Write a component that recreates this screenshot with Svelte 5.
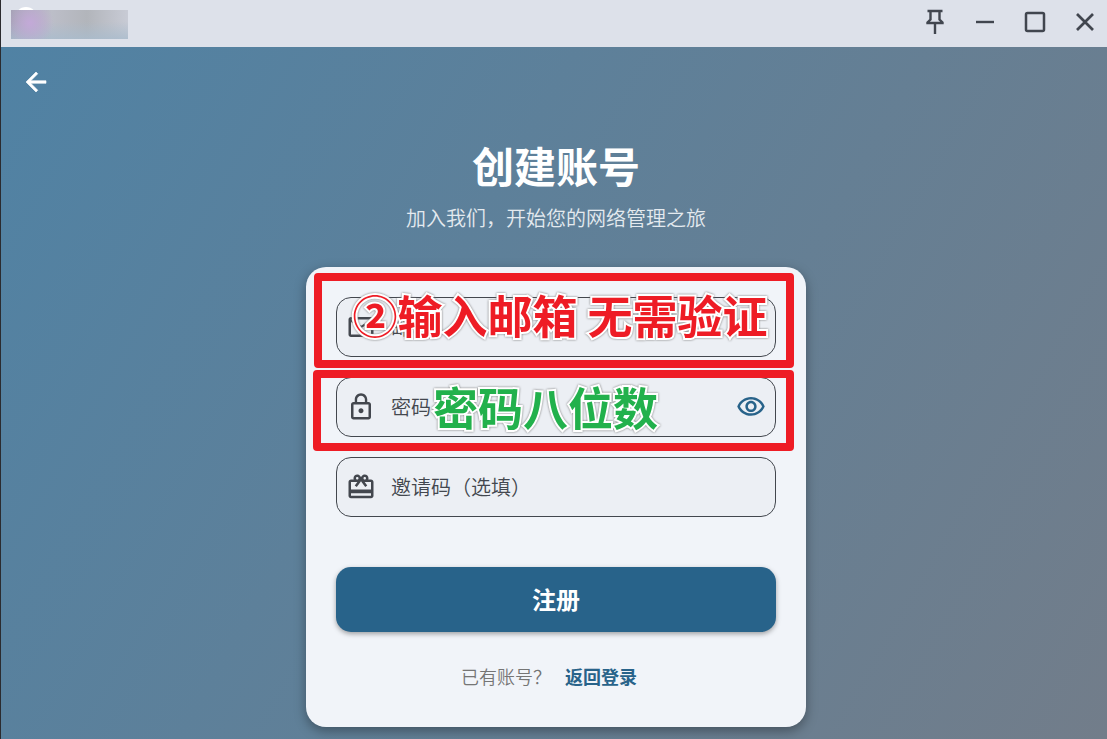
<script lang="ts">
	let email = $state('');
	let password = $state('');
	let invite = $state('');
	let showPassword = $state(false);
</script>

<div class="window">
	<header>
		<div class="brand">
			<span class="logo"></span>
			<span class="masked"></span>
		</div>
		<div class="controls">
			<button aria-label="置顶">
				<svg width="30" height="30" viewBox="0 0 30 30" fill="none" stroke="#41464f" stroke-width="2.4">
					<path d="M7.500 4H22.500M10.500 4V12.500L7.500 15.500V16H22.500V15.500L19.500 12.500V4M15 16V27" />
				</svg>
			</button>
			<button aria-label="最小化">
				<svg width="30" height="30" viewBox="0 0 30 30" fill="none" stroke="#41464f" stroke-width="2.4">
					<path d="M6 15H24" />
				</svg>
			</button>
			<button aria-label="最大化">
				<svg width="30" height="30" viewBox="0 0 30 30" fill="none" stroke="#41464f" stroke-width="2.5">
					<rect x="6" y="6" width="18" height="18" rx="1.500" />
				</svg>
			</button>
			<button aria-label="关闭">
				<svg width="30" height="30" viewBox="0 0 30 30" fill="none" stroke="#41464f" stroke-width="2.7">
					<path d="M7 7L23 23M23 7L7 23" />
				</svg>
			</button>
		</div>
	</header>

	<main>
		<button class="back" aria-label="返回">
			<svg width="30" height="30" viewBox="0 0 24 24" fill="#fff" stroke="#fff" stroke-width=".5">
				<path d="M20 11H7.830l5.590-5.590L12 4l-8 8 8 8 1.410-1.410L7.830 13H20v-2z" />
			</svg>
		</button>

		<h1>创建账号</h1>
		<p class="subtitle">加入我们，开始您的网络管理之旅</p>

		<form onsubmit={(e) => e.preventDefault()}>
			<div class="field">
				<svg width="30" height="30" viewBox="0 0 24 24" fill="#43474e" aria-hidden="true">
					<path d="M22 6c0-1.100-.9-2-2-2H4c-1.100 0-2 .9-2 2v12c0 1.100.9 2 2 2h16c1.100 0 2-.9 2-2V6zm-2 0l-8 5-8-5h16zm0 12H4V8l8 5 8-5v10z" />
				</svg>
				<input type="email" aria-label="邮箱" placeholder="邮箱" bind:value={email} />
				<div class="note email-note"><span>②输入邮箱 无需验证</span></div>
			</div>

			<div class="field">
				<svg width="30" height="30" viewBox="0 0 24 24" fill="#43474e" aria-hidden="true">
					<path d="M12 17c1.100 0 2-.9 2-2s-.9-2-2-2-2 .9-2 2 .9 2 2 2zm6-9h-1V6c0-2.760-2.240-5-5-5S7 3.240 7 6v2H6c-1.100 0-2 .9-2 2v10c0 1.100.9 2 2 2h12c1.100 0 2-.9 2-2V10c0-1.100-.9-2-2-2zM8.900 6c0-1.710 1.390-3.100 3.100-3.100s3.100 1.390 3.100 3.100v2H8.900V6zM18 20H6V10h12v10z" />
				</svg>
				<input type={showPassword ? 'text' : 'password'} aria-label="密码" placeholder="密码" bind:value={password} />
				<button type="button" class="eye" aria-label="显示密码" onclick={() => (showPassword = !showPassword)}>
					<svg width="30" height="30" viewBox="0 0 24 24" fill="#28638a">
						<path d="M12 6c3.790 0 7.170 2.130 8.820 5.500C19.170 14.870 15.790 17 12 17s-7.170-2.130-8.820-5.500C4.830 8.130 8.210 6 12 6m0-2C7 4 2.730 7.110 1 11.500 2.730 15.890 7 19 12 19s9.270-3.110 11-7.500C21.270 7.110 17 4 12 4zm0 5c1.380 0 2.500 1.120 2.500 2.500S13.380 14 12 14s-2.500-1.120-2.500-2.500S10.620 9 12 9m0-2c-2.480 0-4.500 2.020-4.500 4.500S9.520 16 12 16s4.500-2.020 4.500-4.500S14.480 7 12 7z" />
					</svg>
				</button>
				<div class="note password-note"><span>密码八位数</span></div>
			</div>

			<div class="field">
				<svg width="30" height="30" viewBox="0 0 24 24" fill="#43474e" aria-hidden="true">
					<path d="M20 6h-2.180c.11-.31.18-.65.18-1 0-1.660-1.340-3-3-3-1.050 0-1.960.54-2.500 1.350l-.5.670-.5-.680C10.960 2.540 10.050 2 9 2 7.340 2 6 3.340 6 5c0 .35.07.69.18 1H4c-1.110 0-1.990.89-1.990 2L2 19c0 1.110.89 2 2 2h16c1.110 0 2-.89 2-2V8c0-1.110-.89-2-2-2zm-5-2c.55 0 1 .45 1 1s-.45 1-1 1-1-.45-1-1 .45-1 1-1zM9 4c.55 0 1 .45 1 1s-.45 1-1 1-1-.45-1-1 .45-1 1-1zm11 15H4v-2h16v2zm0-5H4V8h5.080L7 10.830 8.620 12 11 8.760l1-1.360 1 1.360L15.380 12 17 10.830 14.920 8H20v6z" />
				</svg>
				<input type="text" aria-label="邀请码" placeholder="邀请码（选填）" bind:value={invite} />
			</div>

			<button class="submit">注册</button>

			<div class="login">
				<span>已有账号？</span>
				<a href="#login">返回登录</a>
			</div>
		</form>
	</main>
</div>

<style>
	:global(body) {
		margin: 0;
	}

	.window {
		display: flex;
		flex-direction: column;
		min-height: 100vh;
		box-sizing: border-box;
		border-left: 1px solid #2b2b2f;
		font-family: "Noto Sans CJK SC", sans-serif;
	}

	button {
		padding: 0;
		border: 0;
		background: none;
		font-family: inherit;
		cursor: pointer;
	}

	svg {
		display: block;
		flex: none;
	}

	header {
		display: flex;
		justify-content: space-between;
		height: 47px;
		background: #dde1ea;
	}

	.brand {
		position: relative;
		width: 127px;
	}

	.logo {
		position: absolute;
		top: 7px;
		left: 14px;
		width: 22px;
		height: 22px;
		border-radius: 50%;
		background: #fff;
	}

	.masked {
		position: absolute;
		top: 10px;
		left: 10px;
		width: 117px;
		height: 29px;
		background:
			radial-gradient(circle at 19px 13px, #c3a9d8 0, transparent 24px),
			linear-gradient(to bottom, transparent 40%, #a9bccdcc),
			linear-gradient(to right, #a4a2b4, #bcbec8 35%, #b2b5bb 65%, #c8cbd5);
	}

	.controls {
		display: flex;
		align-items: center;
		gap: 20px;
		padding: 0 7px 3px 0;
	}

	main {
		position: relative;
		display: flex;
		flex: 1;
		flex-direction: column;
		align-items: center;
		padding: 90px 20px 12px 24px;
		background: linear-gradient(120deg, #5082a4, #727d8a);
	}

	.back {
		position: absolute;
		top: 20px;
		left: 20px;
	}

	h1 {
		margin: 0;
		color: #fff;
		font-size: 42px;
		font-weight: 700;
		line-height: 56px;
	}

	.subtitle {
		margin: 10px 0 34px;
		color: #e4eaef;
		font-size: 20px;
		font-weight: 350;
		line-height: 30px;
	}

	form {
		display: flex;
		flex-direction: column;
		gap: 20px;
		box-sizing: border-box;
		width: 100%;
		max-width: 500px;
		padding: 30px 30px 25px;
		border-radius: 20px;
		background: #f1f4f9;
		box-shadow: 0 4px 12px rgba(0, 0, 0, 0.35);
	}

	.field {
		position: relative;
		display: flex;
		align-items: center;
		box-sizing: border-box;
		height: 60px;
		padding: 0 9px;
		border: 1px solid #43474e;
		border-radius: 15px;
		background: #eceff4;
	}

	input {
		flex: 1;
		min-width: 0;
		padding: 0 0 0 15px;
		border: 0;
		outline: 0;
		background: none;
		color: #1a1c20;
		font-family: inherit;
		font-size: 20px;
		font-weight: 350;
		line-height: 30px;
	}

	input::placeholder {
		color: #43474e;
		opacity: 1;
	}

	/* tutorial marks laid over the form */
	.note {
		position: absolute;
		z-index: 1;
		display: flex;
		justify-content: center;
		box-sizing: border-box;
		border: 8px solid #ee1c25;
		border-radius: 4px;
		font-size: 45px;
		font-weight: 700;
		line-height: 60px;
		white-space: nowrap;
		pointer-events: none;
	}

	.note span {
		paint-order: stroke fill;
		-webkit-text-stroke: 4px #fff;
		filter: drop-shadow(0 0 1px #777);
	}

	.email-note {
		inset: -25px -19px -12px -23px;
		padding-top: 4px;
		padding-left: 12px;
		color: #ee1c25;
	}

	.password-note {
		inset: -8px -19px -15px -24px;
		align-items: flex-end;
		padding-right: 16px;
		padding-bottom: 6px;
		color: #22b14c;
	}

	.submit {
		height: 65px;
		margin-top: 30px;
		padding-bottom: 2px;
		border-radius: 15px;
		background: #28638a;
		box-shadow: 0 2px 5px rgba(0, 0, 0, 0.35);
		color: #fff;
		font-size: 24px;
		font-weight: 700;
	}

	.login {
		display: flex;
		align-items: center;
		justify-content: center;
		gap: 14px;
		box-sizing: border-box;
		height: 50px;
		padding: 0 14px 2px 0;
		font-size: 18px;
	}

	.login span {
		color: #757575;
		font-weight: 350;
	}

	.login a {
		color: #28638a;
		font-weight: 700;
		text-decoration: none;
	}
</style>
